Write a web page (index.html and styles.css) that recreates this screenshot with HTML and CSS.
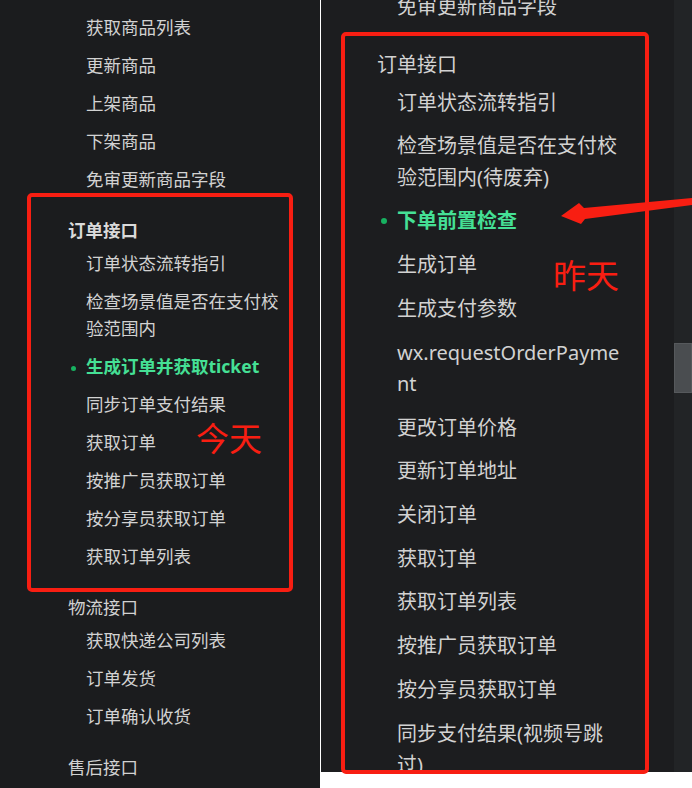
FILE: index.html
```html
<!DOCTYPE html>
<html lang="zh-CN">
<head>
    <meta charset="UTF-8">
    <meta name="viewport" content="width=device-width, initial-scale=1.0">
    <title>订单接口对比</title>
    <link rel="stylesheet" href="styles.css">
</head>
<body>
    <div class="shots">
        <!-- 今天的目录 -->
        <aside class="panel panel-left">
            <div class="nav nav-left">
                <div class="item">获取商品列表</div>
                <div class="item">更新商品</div>
                <div class="item">上架商品</div>
                <div class="item">下架商品</div>
                <div class="item">免审更新商品字段</div>

                <div class="group-title group-open">订单接口</div>
                <div class="item">订单状态流转指引</div>
                <div class="item">检查场景值是否在支付校验范围内</div>
                <div class="item active">生成订单并获取ticket</div>
                <div class="item">同步订单支付结果</div>
                <div class="item">获取订单</div>
                <div class="item">按推广员获取订单</div>
                <div class="item">按分享员获取订单</div>
                <div class="item">获取订单列表</div>

                <div class="group-title">物流接口</div>
                <div class="item">获取快递公司列表</div>
                <div class="item">订单发货</div>
                <div class="item">订单确认收货</div>

                <div class="group-title">售后接口</div>
            </div>
        </aside>

        <!-- 昨天的目录 -->
        <aside class="panel panel-right">
            <div class="nav nav-right">
                <div class="item">免审更新商品字段</div>

                <div class="group-title">订单接口</div>
                <div class="item">订单状态流转指引</div>
                <div class="item">检查场景值是否在支付校验范围内(待废弃)</div>
                <div class="item active">下单前置检查</div>
                <div class="item">生成订单</div>
                <div class="item">生成支付参数</div>
                <div class="item">wx.requestOrderPayment</div>
                <div class="item">更改订单价格</div>
                <div class="item">更新订单地址</div>
                <div class="item">关闭订单</div>
                <div class="item">获取订单</div>
                <div class="item">获取订单列表</div>
                <div class="item">按推广员获取订单</div>
                <div class="item">按分享员获取订单</div>
                <div class="item">同步支付结果(视频号跳过)</div>
            </div>
            <div class="scroll-track">
                <div class="scroll-thumb"></div>
            </div>
        </aside>
    </div>

    <!-- 标注 -->
    <div class="mark-box mark-box-left"></div>
    <div class="mark-box mark-box-right"></div>
    <div class="mark-text mark-today">今天</div>
    <div class="mark-text mark-yesterday">昨天</div>
    <svg class="mark-arrow" width="692" height="788" viewBox="0 0 692 788">
        <polygon points="561,216 579,203 584,208 692,198 692,205 585,219 581,224" fill="#f81e12"/>
    </svg>
</body>
</html>
```

FILE: styles.css
```css
body {
    margin: 0;
    background-color: #ffffff;
    font-family: "Noto Sans", "Noto Sans CJK SC", sans-serif;
}
.shots {
    display: flex;
    align-items: flex-start;
    gap: 1px;
    height: 788px;
}
.panel {
    overflow: hidden;
}
.panel-left {
    width: 320px;
    height: 788px;
    background-color: #1b1c1e;
}
.panel-right {
    flex: 1;
    display: flex;
    height: 772px;
    background-color: #1c1d1f;
}

/* 目录 */
.nav {
    color: #d2d2d2;
}
.nav .item {
    position: relative;
    word-break: break-all;
}
.nav .item.active {
    color: #45e095;
    font-weight: bold;
}
.nav .item.active::before {
    content: "";
    position: absolute;
    border-radius: 50%;
    background-color: #17b160;
}

.nav-left {
    padding: 8px 0 0 68px;
    font-size: 17.5px;
}
.nav-left .group-title {
    margin-top: 19px;
    line-height: 27px;
}
.nav-left .group-open {
    font-weight: bold;
    color: #dadada;
}
.nav-left .item {
    width: 200px;
    padding: 5.5px 0 5.5px 18px;
    line-height: 27px;
}
.nav-left .item.active::before {
    left: 3px;
    top: 19px;
    width: 5px;
    height: 5px;
}

.nav-right {
    flex: 1;
    margin-top: -14.7px;
    padding-left: 56px;
    font-size: 20px;
}
.nav-right .group-title {
    margin-top: 20px;
    line-height: 31.5px;
}
.nav-right .item {
    width: 225px;
    padding: 6.1px 0 6.1px 20px;
    line-height: 31.5px;
}
.nav-right .item.active::before {
    left: 4px;
    top: 19px;
    width: 6px;
    height: 6px;
}

/* 滚动条 */
.scroll-track {
    width: 18px;
    height: 100%;
    background-color: #222426;
}
.scroll-thumb {
    margin-top: 343px;
    height: 50px;
    background-color: #4a4d50;
    border: 1px solid #56595c;
    box-sizing: border-box;
}

/* 红色标注 */
.mark-box {
    position: absolute;
    border: 4px solid #f81e12;
    border-radius: 5px;
    box-sizing: border-box;
}
.mark-box-left {
    left: 27px;
    top: 193px;
    width: 266px;
    height: 399px;
}
.mark-box-right {
    left: 341px;
    top: 32px;
    width: 308px;
    height: 742px;
}
.mark-text {
    position: absolute;
    font-family: "Noto Sans CJK SC", sans-serif;
    font-size: 33px;
    line-height: 33px;
    color: #f81e12;
}
.mark-today {
    left: 196px;
    top: 421px;
}
.mark-yesterday {
    left: 553px;
    top: 258px;
}
.mark-arrow {
    position: absolute;
    left: 0;
    top: 0;
    pointer-events: none;
}
```
